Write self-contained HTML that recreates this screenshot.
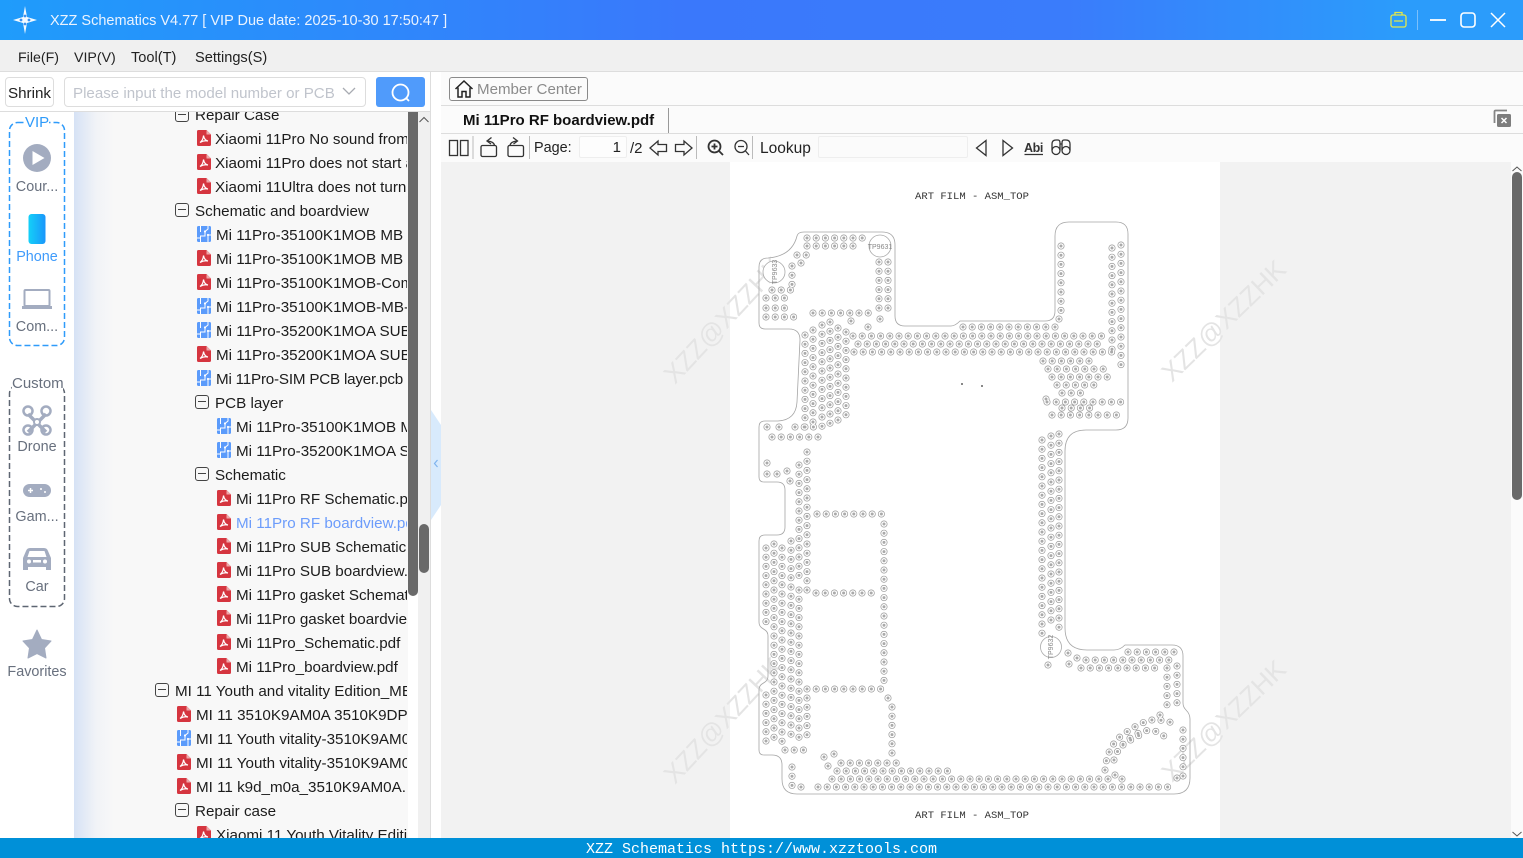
<!DOCTYPE html>
<html><head><meta charset="utf-8"><style>
*{box-sizing:border-box}
html,body{margin:0;padding:0;width:1523px;height:858px;overflow:hidden;background:#fff;font-family:"Liberation Sans","Noto Sans CJK SC",sans-serif;color:#222}
.a{position:absolute}
.tt{position:absolute;white-space:nowrap}
#title{left:0;top:0;width:1523px;height:40px;background:linear-gradient(90deg,#1f9cfb 0,#3a78fb 45%,#3a7cfb 70%,#2b9cfb 92%,#2b9cfb 100%)}
#menu{left:0;top:40px;width:1523px;height:32px;background:#f0f0f0;border-bottom:1px solid #ddd;font-size:14.6px}
#tree{left:74px;top:112px;width:334px;height:726px;background:linear-gradient(90deg,#d6e2f5 0,#f1f3f7 22px,#f8f8f8 40px);overflow:hidden}
#clip{position:absolute;left:0;top:0;width:333px;height:726px;overflow:hidden}
.r{position:absolute;white-space:nowrap;font-size:15.2px;line-height:24px;height:24px;color:#1c1c1c;margin:2px 0 0 1px}
.i{position:absolute;width:14px;height:16px;margin-top:0}
.b{position:absolute;width:14px;height:14px;border:1.3px solid #444;border-radius:3px}
.b:after{content:"";position:absolute;left:2px;right:2px;top:5px;height:1.3px;background:#444}
.sl{position:absolute;width:72px;text-align:center;font-size:14.4px;color:#68707e;left:1px;margin-top:2px}
</style></head><body>
<svg width="0" height="0" style="position:absolute"><defs>
<symbol id="pdf" viewBox="0 0 14 16"><path d="M1.500 0H9.500L14 4.500V14.500A1.500 1.500 0 0 1 12.500 16H1.500A1.500 1.500 0 0 1 0 14.500V1.500A1.500 1.500 0 0 1 1.500 0Z" fill="#d5353f"/><path d="M9.500 0V4.500H14Z" fill="#eea6a9"/><path d="M6.500 5.500C7 8.500 8.500 10.500 11 11C8.500 10.500 5.500 11 3 12.500C5 11 6.300 8.500 6.500 5.500Z" fill="none" stroke="#fff" stroke-width="1.200"/></symbol>
<symbol id="pcb" viewBox="0 0 14 16"><rect width="14" height="16" rx="1.500" fill="#5b9bfb"/><path d="M3.500 0V6M3.500 16V10H8V5.500L11 3V0M0 12H3.500M11 16V9H14" fill="none" stroke="#fff" stroke-width="1"/><circle cx="8" cy="5.500" r="1.100" fill="#fff"/><circle cx="11" cy="9" r="1.100" fill="#fff"/></symbol>
</defs></svg>

<div id="title" class="a">
<svg class="a" style="left:12px;top:5px" width="26" height="30" viewBox="0 0 26 30"><path d="M13 1L15 12L25 15L15 18L13 29L11 18L1 15L11 12Z" fill="#fff" opacity=".95"/><circle cx="9" cy="15" r="1.400" fill="#3a90f0"/><circle cx="17" cy="15" r="1.400" fill="#3a90f0"/><circle cx="13" cy="11" r="1.400" fill="#3a90f0"/><circle cx="13" cy="19" r="1.400" fill="#3a90f0"/></svg>
<div class="tt" style="left:50px;top:13px;font-size:14.5px;color:#eaf3ff">XZZ Schematics V4.77 [ VIP Due date: 2025-10-30 17:50:47 ]</div>
<svg class="a" style="left:1385px;top:8px" width="135" height="26" viewBox="0 0 135 26" fill="none"><rect x="6" y="7" width="15" height="12" rx="2" stroke="#e3e84a" stroke-width="1.300"/><path d="M10 7V4.500H17V7M9 13H18" stroke="#e3e84a" stroke-width="1.300"/><path d="M32.500 2V22" stroke="#7cc0fb"/><path d="M45 12H61" stroke="#fff" stroke-width="1.800"/><rect x="76" y="5" width="14" height="14" rx="3" stroke="#fff" stroke-width="1.600"/><path d="M106 5L120 19M120 5L106 19" stroke="#fff" stroke-width="1.500"/></svg>
</div>

<div id="menu" class="a">
<div class="tt" style="left:18px;top:10px;font-size:14.2px">File(F)</div>
<div class="tt" style="left:74px;top:10px;font-size:14.2px">VIP(V)</div>
<div class="tt" style="left:131px;top:10px">Tool(T)</div>
<div class="tt" style="left:195px;top:10px">Settings(S)</div>
</div>

<div class="a" style="left:0;top:72px;width:430px;height:40px;background:#fff;border-bottom:1px solid #ddd"></div>
<div class="a" style="left:5px;top:77px;width:49px;height:30px;border:1px solid #ddd;border-radius:4px;background:#fff;font-size:15.2px;line-height:31px;text-align:center;color:#222;white-space:nowrap">Shrink</div>
<div class="a" style="left:64px;top:77px;width:302px;height:30px;border:1px solid #ddd;border-radius:4px;background:#fff;font-size:15.1px;line-height:31px;padding-left:8px;color:#c0c4cc;white-space:nowrap">Please input the model number or PCB</div>
<svg class="a" style="left:342px;top:86px" width="14" height="10" viewBox="0 0 14 10"><path d="M1 2L7 8L13 2" fill="none" stroke="#a8abb2" stroke-width="1.300"/></svg>
<div class="a" style="left:376px;top:77px;width:49px;height:30px;background:#509bfb;border-radius:3px"></div>
<svg class="a" style="left:390px;top:82px" width="22" height="22" viewBox="0 0 22 22"><circle cx="10.500" cy="10.500" r="8" fill="none" stroke="#fff" stroke-width="1.800"/><path d="M16 16L19 19" stroke="#fff" stroke-width="1.800"/></svg>

<!-- side -->
<div class="a" style="left:0;top:112px;width:74px;height:726px;background:#fff"></div>
<svg class="a" style="left:0;top:112px" width="74" height="560" viewBox="0 112 74 560">
<defs><linearGradient id="ph" x1="0" x2="1"><stop offset="0" stop-color="#14d0f8"/><stop offset="1" stop-color="#1a96fb"/></linearGradient></defs>
<rect x="9.500" y="122.500" width="55" height="223" rx="8" fill="none" stroke="#2f9bfa" stroke-width="1.500" stroke-dasharray="6 3"/>
<rect x="9.500" y="385.500" width="55" height="221" rx="8" fill="none" stroke="#5e6672" stroke-width="1.500" stroke-dasharray="6 3"/>
<circle cx="37" cy="158" r="14" fill="#a3acc0"/><path d="M32.500 151V165L44.500 158Z" fill="#fff"/>
<rect x="28.500" y="214" width="17" height="30" rx="3" fill="url(#ph)"/>
<rect x="24.500" y="290" width="25" height="16" rx="1" fill="none" stroke="#a3acc0" stroke-width="2"/><path d="M22 307.500H52" stroke="#a3acc0" stroke-width="3"/>
<path d="M28 414L46 432M46 414L28 432" stroke="#a3acc0" stroke-width="3.500"/><g fill="none" stroke="#a3acc0" stroke-width="2.500"><circle cx="28" cy="411" r="4.500"/><circle cx="46" cy="411" r="4.500"/><circle cx="28" cy="430" r="4.500"/><circle cx="46" cy="430" r="4.500"/></g><circle cx="37" cy="422" r="3" fill="#fff" stroke="#a3acc0" stroke-width="2"/>
<rect x="23" y="484" width="28" height="13" rx="6.500" fill="#a3acc0"/><path d="M28 490.500H33M30.500 488V493" stroke="#fff" stroke-width="1.500"/><circle cx="41" cy="489" r="1" fill="#fff"/><circle cx="45" cy="492" r="1" fill="#fff"/>
<path d="M30 548H44Q47 548 48 551L51 558V570H46V567H28V570H23V558L26 551Q27 548 30 548Z" fill="#a3acc0"/><path d="M29.500 551H44.500L46.500 557H27.500Z" fill="#fff"/><circle cx="29" cy="561.500" r="2" fill="#fff"/><circle cx="45" cy="561.500" r="2" fill="#fff"/><rect x="33" y="560" width="8" height="2.500" fill="#fff"/>
<path d="M37 630L41.500 639.500L51 641L44.500 648L46 658L37 653.500L28 658L29.500 648L23 641L32.500 639.500Z" fill="#a3acc0" stroke="#a3acc0" stroke-linejoin="round"/>
</svg>
<div class="a" style="left:25px;top:114px;width:24px;height:18px;background:#fff;color:#2f9bfa;font-size:15px;text-align:center;white-space:nowrap;line-height:18px">VIP</div>
<div class="a" style="left:12px;top:375px;width:51px;height:18px;background:#fff;color:#68707e;font-size:15px;text-align:center;white-space:nowrap;line-height:18px">Custom</div>
<div class="sl" style="top:177px">Cour...</div>
<div class="sl" style="top:247px;color:#3f9bfb">Phone</div>
<div class="sl" style="top:317px">Com...</div>
<div class="sl" style="top:437px">Drone</div>
<div class="sl" style="top:507px">Gam...</div>
<div class="sl" style="top:577px">Car</div>
<div class="sl" style="top:662px">Favorites</div>

<!-- tree -->
<div id="tree" class="a"><div id="clip">
<div class="b" style="left:101px;top:-4px"></div><div class="r" style="left:120px;top:-10px">Repair Case</div>
<svg class="i" style="left:123px;top:18px"><use href="#pdf"/></svg><div class="r" style="left:140px;top:14px">Xiaomi 11Pro No sound from the</div>
<svg class="i" style="left:123px;top:42px"><use href="#pdf"/></svg><div class="r" style="left:140px;top:38px">Xiaomi 11Pro does not start and</div>
<svg class="i" style="left:123px;top:66px"><use href="#pdf"/></svg><div class="r" style="left:140px;top:62px">Xiaomi 11Ultra does not turn on</div>
<div class="b" style="left:101px;top:91px"></div><div class="r" style="left:120px;top:86px">Schematic and boardview</div>
<svg class="i" style="left:123px;top:114px"><use href="#pcb"/></svg><div class="r" style="left:141px;top:110px">Mi 11Pro-35100K1MOB MB PCB</div>
<svg class="i" style="left:123px;top:138px"><use href="#pdf"/></svg><div class="r" style="left:141px;top:134px">Mi 11Pro-35100K1MOB MB info</div>
<svg class="i" style="left:123px;top:162px"><use href="#pdf"/></svg><div class="r" style="left:141px;top:158px">Mi 11Pro-35100K1MOB-Component</div>
<svg class="i" style="left:123px;top:186px"><use href="#pcb"/></svg><div class="r" style="left:141px;top:182px">Mi 11Pro-35100K1MOB-MB-layer</div>
<svg class="i" style="left:123px;top:210px"><use href="#pcb"/></svg><div class="r" style="left:141px;top:206px">Mi 11Pro-35200K1MOA SUB PCB</div>
<svg class="i" style="left:123px;top:234px"><use href="#pdf"/></svg><div class="r" style="left:141px;top:230px">Mi 11Pro-35200K1MOA SUB info</div>
<svg class="i" style="left:123px;top:258px"><use href="#pcb"/></svg><div class="r" style="left:141px;top:254px;letter-spacing:-.2px">Mi 11Pro-SIM PCB layer.pcb</div>
<div class="b" style="left:121px;top:283px"></div><div class="r" style="left:140px;top:278px">PCB layer</div>
<svg class="i" style="left:143px;top:306px"><use href="#pcb"/></svg><div class="r" style="left:161px;top:302px">Mi 11Pro-35100K1MOB MB layer</div>
<svg class="i" style="left:143px;top:330px"><use href="#pcb"/></svg><div class="r" style="left:161px;top:326px">Mi 11Pro-35200K1MOA SUB layer</div>
<div class="b" style="left:121px;top:355px"></div><div class="r" style="left:140px;top:350px">Schematic</div>
<svg class="i" style="left:143px;top:378px"><use href="#pdf"/></svg><div class="r" style="left:161px;top:374px">Mi 11Pro RF Schematic.pdf</div>
<svg class="i" style="left:143px;top:402px"><use href="#pdf"/></svg><div class="r" style="left:161px;top:398px;color:#6c9cfb">Mi 11Pro RF boardview.pdf</div>
<svg class="i" style="left:143px;top:426px"><use href="#pdf"/></svg><div class="r" style="left:161px;top:422px">Mi 11Pro SUB Schematic.pdf</div>
<svg class="i" style="left:143px;top:450px"><use href="#pdf"/></svg><div class="r" style="left:161px;top:446px">Mi 11Pro SUB boardview.pdf</div>
<svg class="i" style="left:143px;top:474px"><use href="#pdf"/></svg><div class="r" style="left:161px;top:470px">Mi 11Pro gasket Schematic.pdf</div>
<svg class="i" style="left:143px;top:498px"><use href="#pdf"/></svg><div class="r" style="left:161px;top:494px">Mi 11Pro gasket boardview.pdf</div>
<svg class="i" style="left:143px;top:522px"><use href="#pdf"/></svg><div class="r" style="left:161px;top:518px">Mi 11Pro_Schematic.pdf</div>
<svg class="i" style="left:143px;top:546px"><use href="#pdf"/></svg><div class="r" style="left:161px;top:542px">Mi 11Pro_boardview.pdf</div>
<div class="b" style="left:81px;top:571px"></div><div class="r" style="left:100px;top:566px">MI 11 Youth and vitality Edition_MB</div>
<svg class="i" style="left:103px;top:594px"><use href="#pdf"/></svg><div class="r" style="left:121px;top:590px">MI 11 3510K9AM0A 3510K9DP2 info</div>
<svg class="i" style="left:103px;top:618px"><use href="#pcb"/></svg><div class="r" style="left:121px;top:614px">MI 11 Youth vitality-3510K9AM0A</div>
<svg class="i" style="left:103px;top:642px"><use href="#pdf"/></svg><div class="r" style="left:121px;top:638px">MI 11 Youth vitality-3510K9AM0A</div>
<svg class="i" style="left:103px;top:666px"><use href="#pdf"/></svg><div class="r" style="left:121px;top:662px">MI 11 k9d_m0a_3510K9AM0A.pdf</div>
<div class="b" style="left:101px;top:691px"></div><div class="r" style="left:120px;top:686px">Repair case</div>
<svg class="i" style="left:123px;top:714px"><use href="#pdf"/></svg><div class="r" style="left:141px;top:710px">Xiaomi 11 Youth Vitality Edition</div>
</div></div>
<div class="a" style="left:408px;top:112px;width:10px;height:484px;background:#696969;border-radius:0 0 5px 5px"></div>
<div class="a" style="left:418px;top:112px;width:12px;height:726px;background:#f0f0f0"></div>
<div class="a" style="left:419px;top:524px;width:10px;height:49px;background:#696969;border-radius:5px"></div>
<svg class="a" style="left:418px;top:115px" width="12" height="10"><path d="M1.500 7L6 2.500L10.500 7" fill="none" stroke="#555"/></svg>
<div class="a" style="left:430px;top:72px;width:1px;height:766px;background:#ddd"></div>
<svg class="a" style="left:431px;top:405px" width="10" height="120" viewBox="0 0 10 120"><path d="M0 5L10 20V100L0 115Z" fill="#d8eafc"/><path d="M6.500 55L3.500 58.500L6.500 62" fill="none" stroke="#7fb4ee" stroke-width="1.200"/></svg>

<!-- viewer -->
<div class="a" style="left:441px;top:72px;width:1082px;height:33px;background:#fbfbfb"></div>
<div class="a" style="left:441px;top:105px;width:1082px;height:1px;background:#ddd"></div>
<div class="a" style="left:441px;top:106px;width:1082px;height:27px;background:#fbfbfb"></div>
<div class="a" style="left:441px;top:133px;width:1082px;height:1px;background:#ddd"></div>
<div class="a" style="left:441px;top:134px;width:1082px;height:28px;background:#fbfbfb"></div>
<div class="a" style="left:449px;top:77px;width:139px;height:24px;border:1px solid #8a8a8a;border-radius:3px;background:#fbfbfb"></div>
<svg class="a" style="left:454px;top:79px" width="20" height="20" viewBox="0 0 20 20"><path d="M1.500 10L10 2L18.500 10M4 8.500V18H8V12.500H12V18H16V8.500" fill="none" stroke="#222" stroke-width="1.500"/></svg>
<div class="tt" style="left:477px;top:81px;font-size:15.1px;color:#8b8b8b">Member Center</div>
<div class="tt" style="left:463px;top:112px;font-size:15px;font-weight:bold;color:#111">Mi 11Pro RF boardview.pdf</div>
<div class="a" style="left:668px;top:108px;width:1px;height:25px;background:#999"></div>
<svg class="a" style="left:1493px;top:109px" width="20" height="20" viewBox="0 0 20 20"><path d="M1.500 14V2.500A1 1 0 0 1 2.500 1.500H14" fill="none" stroke="#858585" stroke-width="1.800"/><rect x="4" y="5" width="14" height="13" rx="1.500" fill="#7d7d7d"/><path d="M8.500 9L13.500 14M13.500 9L8.500 14" stroke="#fff" stroke-width="1.500"/></svg>

<svg class="a" style="left:441px;top:134px" width="640" height="28" viewBox="441 134 640 28" fill="none" stroke="#333" stroke-width="1.300">
<rect x="449.500" y="140.500" width="8" height="15"/><rect x="460.500" y="140.500" width="7.500" height="15"/>
<path d="M473 136V159M529.500 136V159" stroke="#bbb" stroke-width="1"/>
<rect x="481" y="145.500" width="15.500" height="11" rx="1.500"/><path d="M494.500 145.500Q494 141.500 487 141M491.500 137.500L487 141L491 144"/>
<rect x="508" y="145.500" width="15.500" height="11" rx="1.500"/><path d="M510 145.500Q510.500 141.500 517.500 141M513 137.500L517.500 141L513.500 144"/>
<path d="M650 148L658 141V144.500H666.500V151.500H658V155Z"/><path d="M692 148L684 141V144.500H675.500V151.500H684V155Z"/>
<path d="M696.500 136V159M752.500 136V159" stroke="#bbb" stroke-width="1"/>
<circle cx="714.500" cy="146.500" r="6" stroke-width="1.800"/><path d="M719 151L723 155M711.500 146.500H717.500M714.500 143.500V149.500" stroke-width="1.800"/>
<circle cx="741" cy="146.500" r="6"/><path d="M745.500 151L749 155M738 146.500H744"/>
<path d="M986 140.500L976.500 148L986 155.500Z"/><path d="M1003 140.500L1012.500 148L1003 155.500Z"/>
<path d="M1024.500 154.500H1043" stroke-width="1.200"/>
<path d="M1052 150V144Q1052 140 1056 140H1058Q1060 140 1060 143V150M1060.500 144H1062M1062 150V143Q1062 140 1064 140H1066Q1070 140 1070 144V150"/>
<circle cx="1056" cy="150.500" r="4"/><circle cx="1066" cy="150.500" r="4"/>
</svg>
<div class="tt" style="left:1024px;top:141px;font-size:12.500px;color:#333;letter-spacing:-.4px;font-weight:bold">Abi</div>
<div class="tt" style="left:534px;top:140px;font-size:14.4px;color:#222">Page:</div>
<div class="a" style="left:579px;top:136px;width:48px;height:22px;border:1px solid #eee;border-radius:2px;background:#fdfdfd;font-size:15px;line-height:22px;text-align:right;padding-right:5px;color:#222">1</div>
<div class="tt" style="left:630px;top:140px;font-size:15px;color:#222">/2</div>
<div class="tt" style="left:760px;top:140px;font-size:15.500px;color:#222">Lookup</div>
<div class="a" style="left:818px;top:136px;width:150px;height:22px;border:1px solid #eee;border-radius:2px;background:#fbfbfb"></div>

<div class="a" style="left:441px;top:162px;width:1070px;height:676px;background:#f2f2f2"></div>
<div class="a" style="left:730px;top:162px;width:490px;height:676px;background:#fff"></div>
<div class="a" style="left:1511px;top:162px;width:12px;height:676px;background:#fbfbfb"></div>
<div class="a" style="left:1512px;top:172px;width:10px;height:328px;background:#696969;border-radius:5px"></div>
<svg class="a" style="left:1511px;top:165px" width="12" height="8"><path d="M1.500 6L6 2L10.500 6" fill="none" stroke="#555"/></svg>
<svg class="a" style="left:1511px;top:830px" width="12" height="8"><path d="M1.500 2L6 6L10.500 2" fill="none" stroke="#555"/></svg>

<!-- pcb drawing -->
<svg class="a" style="left:441px;top:162px" width="1070" height="676" viewBox="441 162 1070 676">
<defs>
<g id="rows" fill="none" stroke-linecap="round" stroke-dasharray="0 9.200">
<path d="M807 238H864M807 246H858M797 255H810M801 263H803M792 266V286M772 290H792M766 298H792M766 308H792M766 317H802"/>
<path d="M879 262V317M888 262V317M813 313H872M851 321H860M868 327H870M880 319H882"/>
<path d="M805 335V427M813 330V427M822 325V427M830 322V427M838 328V420M846 332V422"/>
<path d="M963 327H1064M853 336H1104M858 344H1100M854 352H1114"/>
<path d="M1061 246V311M1059 319H1061M1112 248V352M1121 245V365"/>
<path d="M1043 361H1098M1048 369H1104M1052 377H1108M1057 385H1094M1062 393H1089M1046 399H1048M1047 402H1123M1062 408H1090M1052 415H1121"/>
<path d="M767 427H768M779 427H780M795 427H815M772 437H820M767 463H768M767 474H768M777 474H778M787 471H788M790 481H791"/>
<path d="M807 452V590M799 465V582M817 514H883M884 524V682M816 593H872M807 689H882M888 698H890M892 707V754"/>
<path d="M766 548V622M774 544V740M782 548V745M791 541V742M799 590V745M766 695V743M807 698V738M785 750H810"/>
<path d="M1042 440V634M1051 436V628M1059 434V632M1048 665H1050"/>
<path d="M1128 652H1174M1086 660H1169M1068 653H1070M1077 658H1079M1069 664H1071M1081 668H1155"/>
<path d="M1167 668V707M1177 666V704M1183 730V781M1177 778H1179M1160 715H1162"/>
<path d="M818 787H1176M832 779H1108M837 771H948M841 763H898M1122 779H1124M1115 775H1117M792 767V787M801 787H803M824 757H826M834 754H836M828 766H830"/>
<path d="M1105 770Q1107 745 1125 733T1152 720T1176 724M1114 760Q1118 745 1135 735T1165 737M1123 745Q1133 738 1146 732"/>
</g>
</defs>
<g font-family="'Liberation Sans',sans-serif" font-size="26" fill="#e4e4e4">
<text transform="translate(675,385) rotate(-47)">XZZ@XZZHK</text>
<text transform="translate(1172,383) rotate(-44)">XZZ@XZZHK</text>
<text transform="translate(675,785) rotate(-47)">XZZ@XZZHK</text>
<text transform="translate(1172,783) rotate(-44)">XZZ@XZZHK</text>
</g>
<g font-family="'Liberation Mono',monospace" font-size="10.550" fill="#333" text-anchor="middle"><text x="972" y="199">ART FILM - ASM_TOP</text><text x="972" y="818">ART FILM - ASM_TOP</text></g>
<path d="M759 267Q759 258 768 258Q792 256 797 236Q798 232 804 232H882Q895 232 895 245V316Q895 326 905 326H951Q955 326 960 321H1045Q1055 321 1055 311V236Q1055 222 1069 222H1116Q1128 222 1128 234V418Q1128 430 1116 430H1086Q1065 430 1065 451V628Q1065 650 1087 650H1114Q1120 650 1125 645H1172Q1183 645 1183 656V703Q1183 707 1186 710Q1190 714 1190 719V778Q1190 794 1174 794H797Q782 794 782 779V765Q782 755 772 755H764Q759 755 759 750V690Q759 686 762 684L765 682Q768 680 768 676V636Q768 632 765 630L762 628Q759 626 759 622V541Q759 535 765 535H777Q785 535 785 527V490Q785 482 777 482H764Q759 482 759 477V427Q759 421 765 421H778Q796 420 797 402L800 340Q800 329 789 329H765Q759 329 759 323Z" fill="none" stroke="#a5a5a5" stroke-width=".8"/>
<use href="#rows" stroke="#9a9a9a" stroke-width="7"/>
<use href="#rows" stroke="#fff" stroke-width="5.600"/>
<use href="#rows" stroke="#aaa" stroke-width="3"/>
<g fill="#fff" stroke="#aaa" stroke-width=".8"><circle cx="880" cy="246" r="11"/><circle cx="774" cy="272" r="11"/><circle cx="1051" cy="647" r="10.500"/></g>
<g font-family="'Liberation Sans',sans-serif" font-size="7" fill="#888" text-anchor="middle"><text x="880" y="249">TP9631</text><text transform="translate(777,272) rotate(-90)">TP9633</text><text transform="translate(1053,647) rotate(-90)">TP9632</text></g>
<rect x="961" y="383" width="2" height="2" fill="#888"/><rect x="981" y="385" width="2" height="2" fill="#888"/>
</svg>

<div class="a" style="left:0;top:838px;width:1523px;height:20px;background:#0090d8;color:#fff;font-family:'Liberation Mono',monospace;font-size:15px;line-height:23px;text-align:center;white-space:nowrap;overflow:hidden">XZZ Schematics https://www.xzztools.com</div>
</body></html>
